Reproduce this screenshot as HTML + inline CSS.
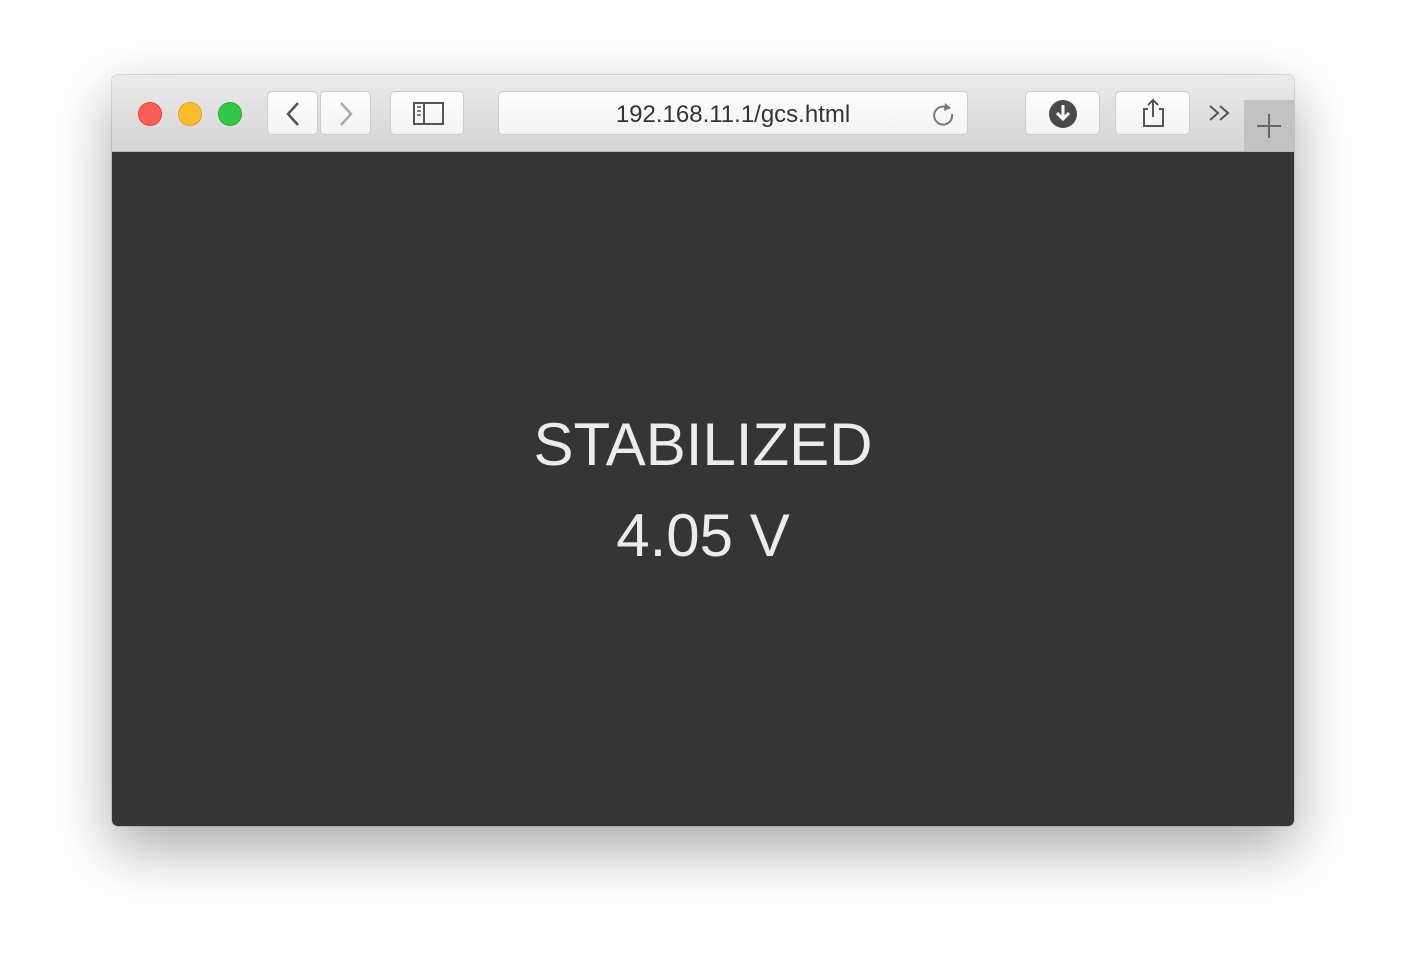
<!DOCTYPE html>
<html><head><style>
body{margin:0;width:1406px;height:974px;background:#fff;position:relative;overflow:hidden;font-family:"Liberation Sans",sans-serif}
.win{position:absolute;left:112px;top:75px;width:1182px;height:751px;border-radius:6px;overflow:hidden;box-shadow:0 22px 60px rgba(0,0,0,.35),0 0 0 1px rgba(0,0,0,.12)}
.tb{position:absolute;left:0;top:0;width:100%;height:76px;background:linear-gradient(#ebebeb,#d4d4d4);border-bottom:1px solid #b8b8b8}
.dot{position:absolute;top:27px;width:24px;height:24px;border-radius:50%}
.btn{position:absolute;top:16px;height:44px;background:linear-gradient(#fdfdfd,#f3f3f3);border:1px solid #cdcdcd;border-radius:5px;box-sizing:border-box}
.content{position:absolute;left:0;top:77px;width:100%;height:674px;background:#353535;color:#ececec;text-align:center}
</style></head><body>
<div class="win">
<div class="tb">
<div class="dot" style="left:26px;background:#fc5f57;border:1px solid #e0443e;box-sizing:border-box"></div>
<div class="dot" style="left:66px;background:#fdbc2e;border:1px solid #dea123;box-sizing:border-box"></div>
<div class="dot" style="left:106px;background:#33c748;border:1px solid #27aa35;box-sizing:border-box"></div>
<div class="btn" style="left:155px;width:51px"><svg width="51" height="44"><path d="M30 11 L20 22 L30 33" fill="none" stroke="#555" stroke-width="2.5"/></svg></div>
<div class="btn" style="left:208px;width:51px"><svg width="51" height="44"><path d="M20 11 L30 22 L20 33" fill="none" stroke="#aaa" stroke-width="2.5"/></svg></div>
<div class="btn" style="left:278px;width:74px"><svg width="74" height="44"><rect x="23" y="11" width="29" height="21" fill="none" stroke="#555" stroke-width="2"/><line x1="33" y1="11" x2="33" y2="32" stroke="#555" stroke-width="2"/><path d="M26 15h4M26 19h4M26 23h4" stroke="#555" stroke-width="1.5"/></svg></div>
<div class="btn" style="left:386px;width:470px;font-size:24px;color:#333;line-height:46px;text-align:center">192.168.11.1/gcs.html
<svg style="position:absolute;right:10px;top:8px" width="28" height="28"><path d="M19 8 A9 9 0 1 0 23 14" fill="none" stroke="#777" stroke-width="2"/><path d="M16 3 L22 8 L15 11Z" fill="#777"/></svg></div>
<div class="btn" style="left:913px;width:75px"><svg width="75" height="44"><circle cx="37" cy="22" r="14" fill="#4a4a4a"/><path d="M37 13v14M31 21l6 6 6-6" fill="none" stroke="#fff" stroke-width="3"/></svg></div>
<div class="btn" style="left:1003px;width:75px"><svg width="75" height="44"><path d="M32 17h-4v17h19v-17h-4M37 8v17M32 13l5-5 5 5" fill="none" stroke="#555" stroke-width="2"/></svg></div>
<svg style="position:absolute;left:1095px;top:28px" width="28" height="20"><path d="M3 3l8 7-8 7M13 3l8 7-8 7" fill="none" stroke="#555" stroke-width="2"/></svg>
<div style="position:absolute;left:1132px;top:25px;width:50px;height:51px;background:#c2c2c2"><svg width="50" height="51"><path d="M25 14v24M13 26h24" stroke="#666" stroke-width="2"/></svg></div>
</div>
<div class="content">
<div style="position:absolute;left:0;right:0;top:258px;font-size:60px;line-height:70px">STABILIZED</div>
<div style="position:absolute;left:0;right:0;top:349px;font-size:60px;line-height:70px">4.05 V</div>
</div>
</div>
</body></html>
